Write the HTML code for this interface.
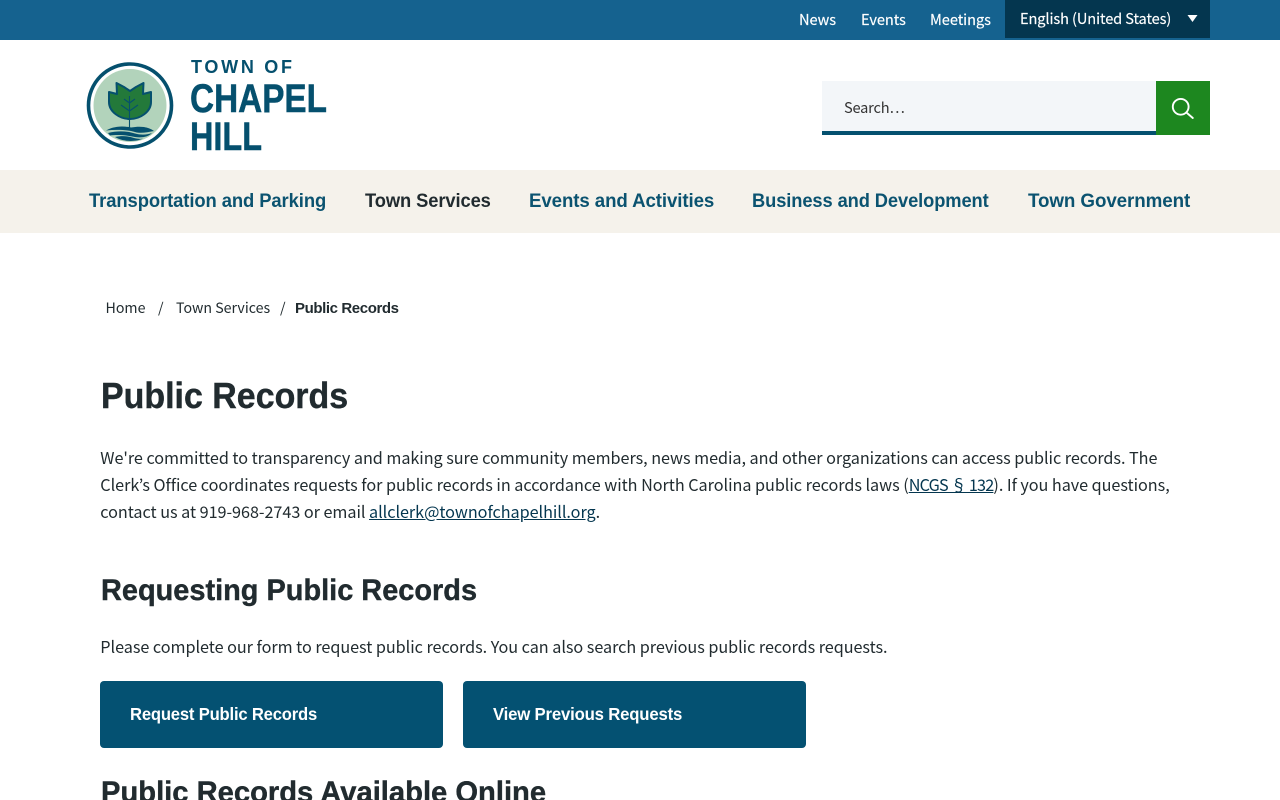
<!DOCTYPE html>
<html lang="en"><head><meta charset="utf-8"><title>Public Records</title>
<style>
html,body{margin:0;padding:0;background:#fff;width:1280px;height:800px;overflow:hidden}
body{position:relative;font-family:"Noto Sans CJK JP","Liberation Sans",sans-serif;color:#212b2f}
.a{position:absolute;white-space:nowrap;display:block}
a{color:inherit;text-decoration:none}
.top{left:0;top:0;width:1280px;height:40px;background:#15628f}
.t{font-size:14.6px;line-height:20px;top:10px;color:#fff;letter-spacing:-.05px;-webkit-text-stroke:.15px #fff}
.lang{left:1005px;top:0;width:205px;height:38px;background:#04364f}
.nav{left:0;top:170px;width:1280px;height:63px;background:#f5f2eb}
.n{font-family:"Liberation Sans",sans-serif;font-weight:700;font-size:19.5px;line-height:24px;top:189px;color:#0b5370;letter-spacing:-.1px;transform-origin:0 50%}
.b{font-size:14.2px;line-height:20px;top:298px}
.p{font-size:16.2px;line-height:27px;left:100.3px;letter-spacing:-.035px}
.p a{color:#04364f;text-decoration:underline}
h1,h2{margin:0;font-family:"Liberation Sans",sans-serif;font-weight:700;color:#212b2f;transform-origin:0 50%;-webkit-text-stroke:.4px #212b2f}
.btn{top:681px;width:343px;height:67px;background:#045172;border-radius:4px}
.bt{top:703px;font-family:"Liberation Sans",sans-serif;font-weight:700;font-size:17.5px;line-height:22px;color:#fff;letter-spacing:-.2px;transform-origin:0 50%}
</style></head><body>
<div class="a top"></div>
<a class="a t" style="left:799px">News</a>
<a class="a t" style="left:861px">Events</a>
<a class="a t" style="left:930px">Meetings</a>
<div class="a lang"></div>
<span class="a t" style="left:1020px;top:9px;letter-spacing:-.1px">English (United States)</span>
<svg class="a" style="left:1186px;top:14px" width="13" height="9"><path d="M1.5 1H11.5L6.5 8z" fill="#fff"/></svg>

<svg class="a" style="left:80px;top:50px" width="260" height="110" viewBox="0 0 260 110">
<circle cx="50" cy="55.5" r="41.5" fill="#fff" stroke="#05506e" stroke-width="3.6"/>
<circle cx="50" cy="55.5" r="36.5" fill="#b2d3bb"/>
<path d="M29 42L37 44L36.5 33L44 37L50 41L56 37L63.5 33L63 44L71 42V52C71 62 60 69 50 69C40 69 29 62 29 52Z" fill="#23793a" stroke="#05506e" stroke-width="2" stroke-linejoin="round"/>
<path d="M49.500 78V46M49.500 53L44 49M49.500 53L55 49M49.500 61L41 55M49.500 61L58 55" stroke="#05506e" stroke-width="1.1" fill="none"/>
<path d="M26 80.500C35 75.500 44 76 51 77.500C60 76 68 76.500 74 81C67 82.500 60 83.500 55 82C46 79.500 36 79.500 26 80.500Z" fill="#05506e"/>
<path d="M28 83C38 80.500 47 81 55 83.500C62 85.500 68 84.500 72 83C68 87 62 88 55 87C46 85 37 84.500 30 85.500Z" fill="#05506e"/>
<path d="M35 87C42 85.500 48 86 54 88C58 89 61 89 63 88.500C56 92 43 92 35 87Z" fill="#05506e"/>
<text x="111" y="23" font-family="Liberation Sans" font-weight="700" font-size="18" fill="#05506e" textLength="101" lengthAdjust="spacing">TOWN OF</text>
<text x="110" y="62" font-family="Liberation Sans" font-weight="700" font-size="40" fill="#05506e" stroke="#05506e" stroke-width=".5" textLength="137" lengthAdjust="spacingAndGlyphs">CHAPEL</text>
<text x="110" y="100" font-family="Liberation Sans" font-weight="700" font-size="40" fill="#05506e" stroke="#05506e" stroke-width=".5" textLength="72" lengthAdjust="spacingAndGlyphs">HILL</text>
</svg>

<div class="a" style="left:822px;top:81px;width:334px;height:50px;background:#f3f6f9;border-bottom:4px solid #04506f"></div>
<span class="a" style="left:844px;top:97px;font-size:14.6px;line-height:21px;color:#333;letter-spacing:-.2px">Search…</span>
<div class="a" style="left:1156px;top:81px;width:54px;height:54px;background:#1d871f"></div>
<svg class="a" style="left:1170px;top:95px" width="26" height="26" viewBox="0 0 26 26" fill="none" stroke="#fff" stroke-width="1.9"><circle cx="10.7" cy="11.8" r="7.9"/><path d="M16.4 17.5L22.8 23" stroke-linecap="round"/></svg>

<div class="a nav"></div>
<a class="a n" style="left:89px;transform:scaleX(.945)">Transportation and Parking</a>
<a class="a n" style="left:365px;color:#212b2f;transform:scaleX(.94)">Town Services</a>
<a class="a n" style="left:529px;transform:scaleX(.958)">Events and Activities</a>
<a class="a n" style="left:752.300px;transform:scaleX(.938)">Business and Development</a>
<a class="a n" style="left:1028px;transform:scaleX(.964)">Town Government</a>

<a class="a b" style="left:105.500px">Home</a><span class="a b" style="left:158px">/</span>
<a class="a b" style="left:176px">Town Services</a><span class="a b" style="left:280px">/</span>
<span class="a b" style="left:295px;top:299px;font-family:'Liberation Sans',sans-serif;font-weight:700;font-size:15px;letter-spacing:-.4px">Public Records</span>

<h1 class="a" style="left:101px;top:374px;font-size:36px;line-height:44px;transform:scaleX(.943)">Public Records</h1>
<p class="a p" style="margin:0;top:444px;letter-spacing:-.038px">We're committed to transparency and making sure community members, news media, and other organizations can access public records. The</p>
<p class="a p" style="margin:0;top:471px;letter-spacing:-.028px">Clerk’s Office coordinates requests for public records in accordance with North Carolina public records laws (<a style="letter-spacing:-.8px">NCGS § 132</a><span style="letter-spacing:-.035px">). If you have questions,</span></p>
<p class="a p" style="margin:0;top:498px">contact us at 919-968-2743 or email <a>allclerk@townofchapelhill.org</a>.</p>
<h2 class="a" style="left:101px;top:572px;font-size:30px;line-height:37px;transform:scaleX(.964)">Requesting Public Records</h2>
<p class="a p" style="margin:0;top:633px">Please complete our form to request public records. You can also search previous public records requests.</p>
<a class="a btn" style="left:100px"></a><span class="a bt" style="left:130px;transform:scaleX(.95)">Request Public Records</span>
<a class="a btn" style="left:463px"></a><span class="a bt" style="left:493px;transform:scaleX(.957)">View Previous Requests</span>
<h2 class="a" style="left:101px;top:774px;font-size:30px;line-height:37px;transform:scaleX(.972)">Public Records Available Online</h2>
</body></html>
